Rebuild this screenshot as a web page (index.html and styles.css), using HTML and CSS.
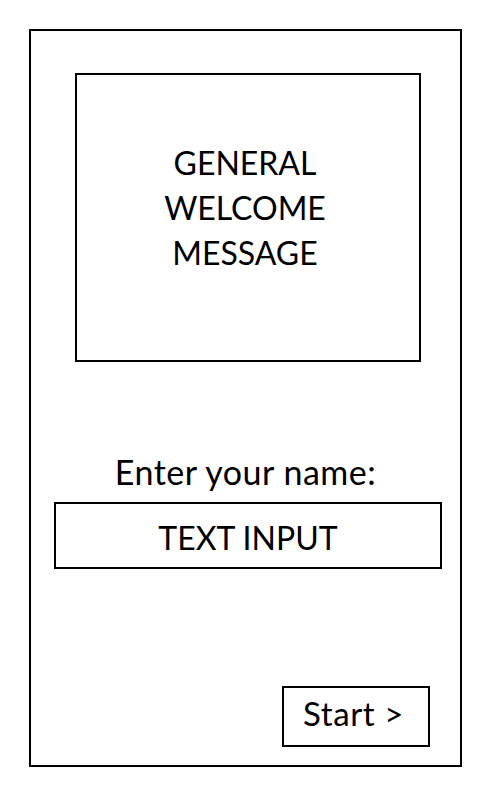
FILE: index.html
```html
<!DOCTYPE html>
<html>
<head>
<meta charset="utf-8">
<link rel="stylesheet" href="styles.css">
</head>
<body>
<div class="frame">
  <div class="welcome">
    <p class="welcome-text">GENERAL<br>WELCOME<br>MESSAGE</p>
  </div>
  <label class="label" for="name">Enter your name:</label>
  <div class="input" id="name">TEXT INPUT</div>
  <div class="button">Start &gt;</div>
</div>
</body>
</html>
```
FILE: styles.css
```css
html, body {
  margin: 0;
  padding: 0;
  background: #fff;
}
body {
  font-family: Lato, "Open Sans", sans-serif;
  color: #000;
}
.frame {
  margin: 29px 0 0 29px;
  width: 433px;
  height: 738px;
  border: 2px solid #000;
  box-sizing: border-box;
  display: flex;
  flex-direction: column;
  align-items: flex-start;
}
.welcome {
  margin: 42px 0 0 44px;
  width: 346px;
  height: 289px;
  border: 2px solid #000;
  box-sizing: border-box;
  display: flex;
  align-items: center;
  justify-content: center;
}
.welcome-text {
  margin: 0 0 20px -6px;
  font-size: 32px;
  line-height: 45px;
  text-align: center;
}
.label {
  align-self: stretch;
  margin-top: 90px;
  font-size: 34px;
  letter-spacing: 0.5px;
  line-height: 40px;
  text-align: center;
}
.input {
  margin: 10px 0 0 23px;
  width: 388px;
  height: 67px;
  border: 2px solid #000;
  box-sizing: border-box;
  display: flex;
  align-items: center;
  justify-content: center;
  font-size: 32px;
  padding-top: 3px;
}
.button {
  margin: 117px 0 0 251px;
  width: 148px;
  height: 61px;
  border: 2px solid #000;
  box-sizing: border-box;
  display: flex;
  align-items: center;
  justify-content: center;
  font-size: 33px;
  letter-spacing: 0.6px;
  padding: 0 5px 7px 0;
}
```
